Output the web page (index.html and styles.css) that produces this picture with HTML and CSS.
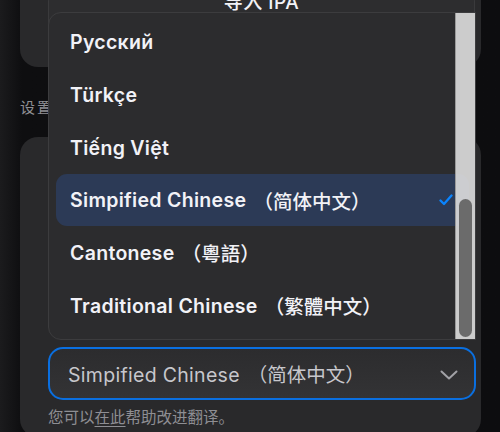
FILE: index.html
```html
<!DOCTYPE html>
<html lang="zh">
<head>
<meta charset="utf-8">
<link rel="stylesheet" href="styles.css">
</head>
<body>
<div class="page">
  <section class="card card-top">
    <button class="import-btn">导入 IPA</button>
  </section>
  <div class="section-label">设置</div>
  <section class="card card-settings">
    <div class="popup-slot">
      <div class="popup">
        <ul class="options">
          <li class="option">Русский</li>
          <li class="option">Türkçe</li>
          <li class="option">Tiếng Việt</li>
          <li class="option selected">Simpified Chinese <span class="cjk">（简体中文）</span>
            <svg class="check" viewBox="0 0 14 12" width="14" height="12"><path d="M1.5 6.5 L5 10 L12.5 1.5" fill="none" stroke="#0a84ff" stroke-width="2.3" stroke-linecap="round" stroke-linejoin="round"/></svg>
          </li>
          <li class="option">Cantonese <span class="cjk">（粵語）</span></li>
          <li class="option">Traditional Chinese <span class="cjk">（繁體中文）</span></li>
        </ul>
        <div class="scrollbar"><div class="thumb"></div></div>
      </div>
    </div>
    <div class="select">
      <span class="select-value">Simpified Chinese <span class="cjk">（简体中文）</span></span>
      <svg class="chevron" viewBox="0 0 18 10" width="18" height="10"><path d="M1.5 1.5 L9 8.5 L16.5 1.5" fill="none" stroke="#a1a1a6" stroke-width="2" stroke-linecap="round" stroke-linejoin="round"/></svg>
    </div>
    <p class="help">您可以<a class="help-link">在此</a>帮助改进翻译。</p>
  </section>
</div>
</body>
</html>
```
FILE: styles.css
```css
* { box-sizing: border-box; }
html, body { margin: 0; padding: 0; }
body {
  width: 500px;
  height: 432px;
  overflow: hidden;
  background: linear-gradient(90deg, #1b1b1d 0px, #0e0e10 22px, #0d0d0f 100%);
  font-family: Inter, "Noto Sans CJK SC", sans-serif;
  color: #f2f2f7;
  text-spacing-trim: space-all;
}
.page {
  padding: 0 19px 0 20px;
  display: flex;
  flex-direction: column;
}
.card {
  background: #29292b;
  border-radius: 18px;
}
.card-top {
  margin-top: -40px;
  height: 107px;
  padding: 0 6px 18px 28px;
  display: flex;
  align-items: flex-end;
}
.import-btn {
  width: 100%;
  height: 60px;
  background: #2d2d2f;
  border: 1px solid #3a3a3c;
  border-radius: 12px;
  color: #f2f2f7;
  font-family: Inter, "Noto Sans CJK SC", sans-serif;
  font-size: 19px;
  font-weight: 500;
  letter-spacing: 0.5px;
  display: flex;
  justify-content: center;
  align-items: flex-start;
  padding: 3px 0 0 0;
  line-height: 20px;
}
.section-label {
  margin: 29px 0 0 0;
  height: 41px;
  font-size: 15px;
  color: #8e8e93;
  letter-spacing: 2px;
}
.card-settings {
  height: 300px;
  padding: 0 5px 0 28px;
  position: relative;
}
.popup-slot {
  height: 210px;
  position: relative;
}
.popup {
  position: absolute;
  left: 0;
  right: 0;
  bottom: 7px;
  height: 328px;
  background: #2c2c2e;
  border: 1px solid #3c3c3e;
  border-radius: 13px 0 0 13px;
  padding: 2px 0 0 0;
  overflow: hidden;
  z-index: 5;
}
.options {
  list-style: none;
  margin: 0;
  padding: 0;
}
.option {
  height: 53px;
  display: flex;
  align-items: center;
  padding-left: 21px;
  font-size: 19.5px;
  font-weight: 600;
  letter-spacing: 0.3px;
  color: #f2f2f7;
  position: relative;
  white-space: pre;
}
.cjk {
  font-family: "Noto Sans CJK SC", sans-serif;
  font-weight: 500;
  font-size: 19.5px;
  letter-spacing: 0;
  margin-left: 2px;
}
.option.selected {
  margin: 0 6px 0 7px;
  padding-left: 14px;
  height: 52px;
  border-radius: 11px;
  background: #2c3a56;
}
.check {
  position: absolute;
  right: 16px;
  top: 20px;
}
.scrollbar {
  position: absolute;
  top: 0;
  right: 0;
  bottom: 0;
  width: 20px;
  background: rgba(222, 222, 222, 0.9);
  border-left: 1px solid #9a9a9a;
  z-index: 1;
}
.thumb {
  position: absolute;
  left: 3px;
  width: 13px;
  top: 186px;
  bottom: 2px;
  border-radius: 7px;
  background: #6b6b6b;
}
.select {
  height: 53px;
  border: 2px solid #0a6fe0;
  border-radius: 15px;
  background: linear-gradient(180deg, #2c2c2e, #333335);
  display: flex;
  align-items: center;
  justify-content: space-between;
  padding: 0 16px 0 18px;
}
.select-value {
  font-size: 19.5px;
  font-weight: 400;
  letter-spacing: 0.3px;
  color: #c7c7cc;
  white-space: pre;
}
.select-value .cjk {
  font-weight: 400;
}
.chevron { margin-top: 2px; }
.help {
  margin: 5px 0 0 0;
  font-size: 15.5px;
  color: #8e8e93;
}
.help-link {
  text-decoration: underline;
  text-underline-offset: 3px;
}
```
